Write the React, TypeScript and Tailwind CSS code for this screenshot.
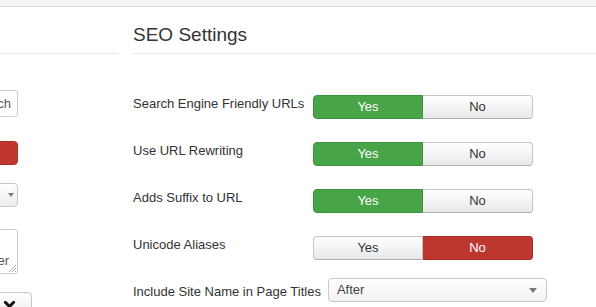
import React from "react";

function Toggle({ yes }: { yes: boolean }) {
  const active = yes
    ? "bg-[#47a447] border-[#3e903e] text-white"
    : "bg-[#bd362f] border-[#a52f29] text-white";
  const inactive =
    "bg-gradient-to-b from-white to-[#e8e8e8] border-[#c4c4c4] border-b-[#b0b0b0] text-[#333]";
  return (
    <div className="flex w-[220px] h-[24px] text-[13px] leading-[22px]">
      <div
        className={`w-[110px] h-full border rounded-l-[4px] flex items-center justify-center ${
          yes ? active : inactive
        }`}
      >
        Yes
      </div>
      <div
        className={`w-[110px] h-full border border-l-0 rounded-r-[4px] flex items-center justify-center ${
          yes ? inactive : active
        }`}
      >
        No
      </div>
    </div>
  );
}

function Row({ label, yes }: { label: string; yes: boolean }) {
  return (
    <div className="flex items-start h-[24px] mb-[23px]">
      <div className="w-[180px] shrink-0 text-[13px] leading-[18px]">{label}</div>
      <Toggle yes={yes} />
    </div>
  );
}

export default function App() {
  return (
    <div className="w-[596px] h-[307px] overflow-hidden bg-white text-[#333] font-['Liberation_Sans',Arial,sans-serif]">
      <div className="h-[7px] bg-[#f4f4f4] border-b border-[#dcdcdc]" />
      <div className="flex gap-[15px]">
        {/* left column */}
        <div className="w-[118px] shrink-0">
          <div className="h-[47px] border-b border-[#e5e5e5]" />
          {/* input */}
          <div className="mt-[36px] ml-[-102px] w-[120px] h-[27px] border border-[#cccccc] rounded-[3px] bg-white flex items-center justify-end pr-[6px] text-[13px] text-[#555]">
            Search
          </div>
          {/* red button */}
          <div className="mt-[24px] ml-[-102px] w-[120px] h-[24px] rounded-[4px] bg-[#c0372f] border border-[#aa2f28]" />
          {/* select */}
          <div className="mt-[18px] ml-[-102px] w-[120px] h-[24px] rounded-[4px] border border-[#c8c8c8] bg-gradient-to-b from-white to-[#ececec] flex items-center justify-end pr-[3px]">
            <svg width="6" height="4" viewBox="0 0 6 4">
              <path d="M0 0 L6 0 L3 4 Z" fill="#7a7a7a" />
            </svg>
          </div>
          {/* textarea */}
          <div className="relative mt-[22px] ml-[-102px] w-[120px] h-[45px] rounded-[3px] border border-[#cccccc] bg-white flex items-end justify-end pr-[8px] pb-[5px] text-[13px] leading-[14px] text-[#555]">
            Footer
            <svg className="absolute right-[1px] bottom-[1px]" width="8" height="8" viewBox="0 0 8 8">
              <path d="M8 1 L1 8 M8 4 L4 8 M8 7 L7 8" stroke="#999" strokeWidth="0.9" />
            </svg>
          </div>
          {/* button with chevron */}
          <div className="mt-[18px] ml-[-102px] w-[134px] h-[26px] rounded-[4px] border border-[#c8c8c8] bg-gradient-to-b from-white to-[#ececec] flex items-center justify-end pr-[16px]">
            <svg width="11" height="8" viewBox="0 0 11 8">
              <path d="M1.3 1.3 L5.5 5.5 L9.7 1.3" fill="none" stroke="#111" strokeWidth="3" strokeLinecap="square" />
            </svg>
          </div>
        </div>

        {/* right column */}
        <div className="flex-1">
          <div className="mt-[16px] pb-[6px] border-b border-[#e5e5e5]">
            <h2 className="text-[19px] leading-[24px] font-normal text-[#333]">SEO Settings</h2>
          </div>
          <div className="mt-[41px]">
            <Row label="Search Engine Friendly URLs" yes={true} />
            <Row label="Use URL Rewriting" yes={true} />
            <Row label="Adds Suffix to URL" yes={true} />
            <div className="flex items-start h-[24px] mb-[18px]">
              <div className="w-[180px] shrink-0 text-[13px] leading-[18px]">Unicode Aliases</div>
              <Toggle yes={false} />
            </div>
            <div className="flex items-start">
              <div className="mt-[5px] mr-[7px] whitespace-nowrap text-[13px] leading-[18px]">
                Include Site Name in Page Titles
              </div>
              <div className="w-[219px] h-[24px] rounded-[4px] border border-[#c8c8c8] bg-gradient-to-b from-white to-[#f2f2f2] flex items-center justify-between pl-[8px] pr-[9px] text-[13px] text-[#444]">
                <span>After</span>
                <svg width="8" height="5" viewBox="0 0 8 5">
                  <path d="M0 0 L8 0 L4 5 Z" fill="#7a7a7a" />
                </svg>
              </div>
            </div>
          </div>
        </div>
      </div>
    </div>
  );
}
